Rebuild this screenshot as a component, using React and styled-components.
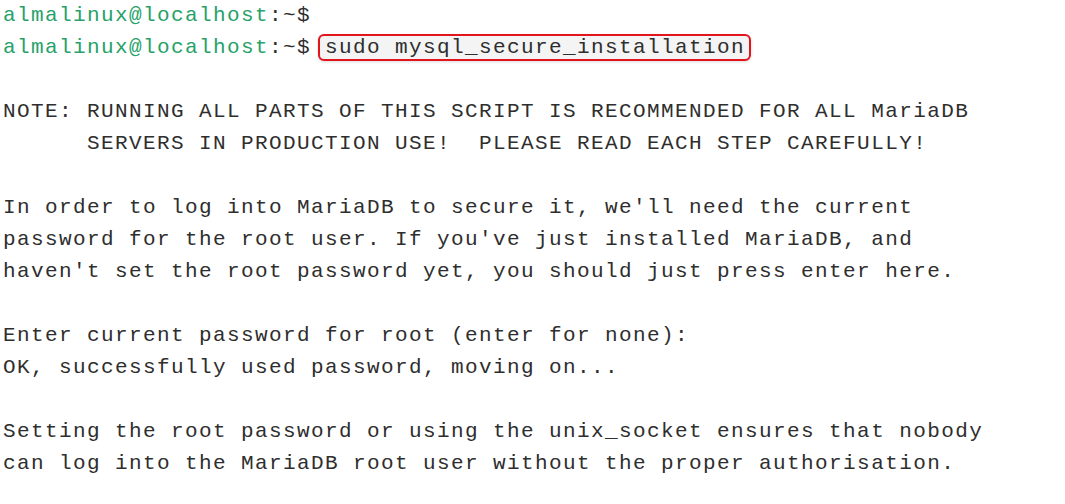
import styled, { createGlobalStyle } from 'styled-components'

const Global = createGlobalStyle`
  html, body {
    margin: 0;
    padding: 0;
    background: #ffffff;
  }
`

const Terminal = styled.div`
  width: 1065px;
  height: 504px;
  overflow: hidden;
  box-sizing: border-box;
  padding: 0 0 0 3px;
  background: #ffffff;
  color: #2e2e2e;
  font-family: "Liberation Mono", monospace;
  font-size: 21px;
  letter-spacing: 1.4px;
  line-height: 32px;
`

const Line = styled.div`
  height: 32px;
  white-space: pre;
`

const Prompt = styled.span`
  color: #26a269;
`

const Highlight = styled.span`
  display: inline-block;
  line-height: 23px;
  margin-left: 7px;
  padding: 0 4px 0 5px;
  border: 2px solid #e3141c;
  border-radius: 6px;
  background: #f4f4f4;
  box-shadow: 0 1px 3px rgba(0, 0, 0, 0.15);
`

const lines = [
  null,
  null,
  '',
  'NOTE: RUNNING ALL PARTS OF THIS SCRIPT IS RECOMMENDED FOR ALL MariaDB',
  '      SERVERS IN PRODUCTION USE!  PLEASE READ EACH STEP CAREFULLY!',
  '',
  "In order to log into MariaDB to secure it, we'll need the current",
  "password for the root user. If you've just installed MariaDB, and",
  "haven't set the root password yet, you should just press enter here.",
  '',
  'Enter current password for root (enter for none):',
  'OK, successfully used password, moving on...',
  '',
  'Setting the root password or using the unix_socket ensures that nobody',
  'can log into the MariaDB root user without the proper authorisation.',
]

function App() {
  return (
    <>
      <Global />
      <Terminal>
        <Line>
          <Prompt>almalinux@localhost</Prompt>:~$
        </Line>
        <Line>
          <Prompt>almalinux@localhost</Prompt>:~$<Highlight>sudo mysql_secure_installation</Highlight>
        </Line>
        {lines.slice(2).map((text, i) => (
          <Line key={i}>{text}</Line>
        ))}
      </Terminal>
    </>
  )
}

export default App
